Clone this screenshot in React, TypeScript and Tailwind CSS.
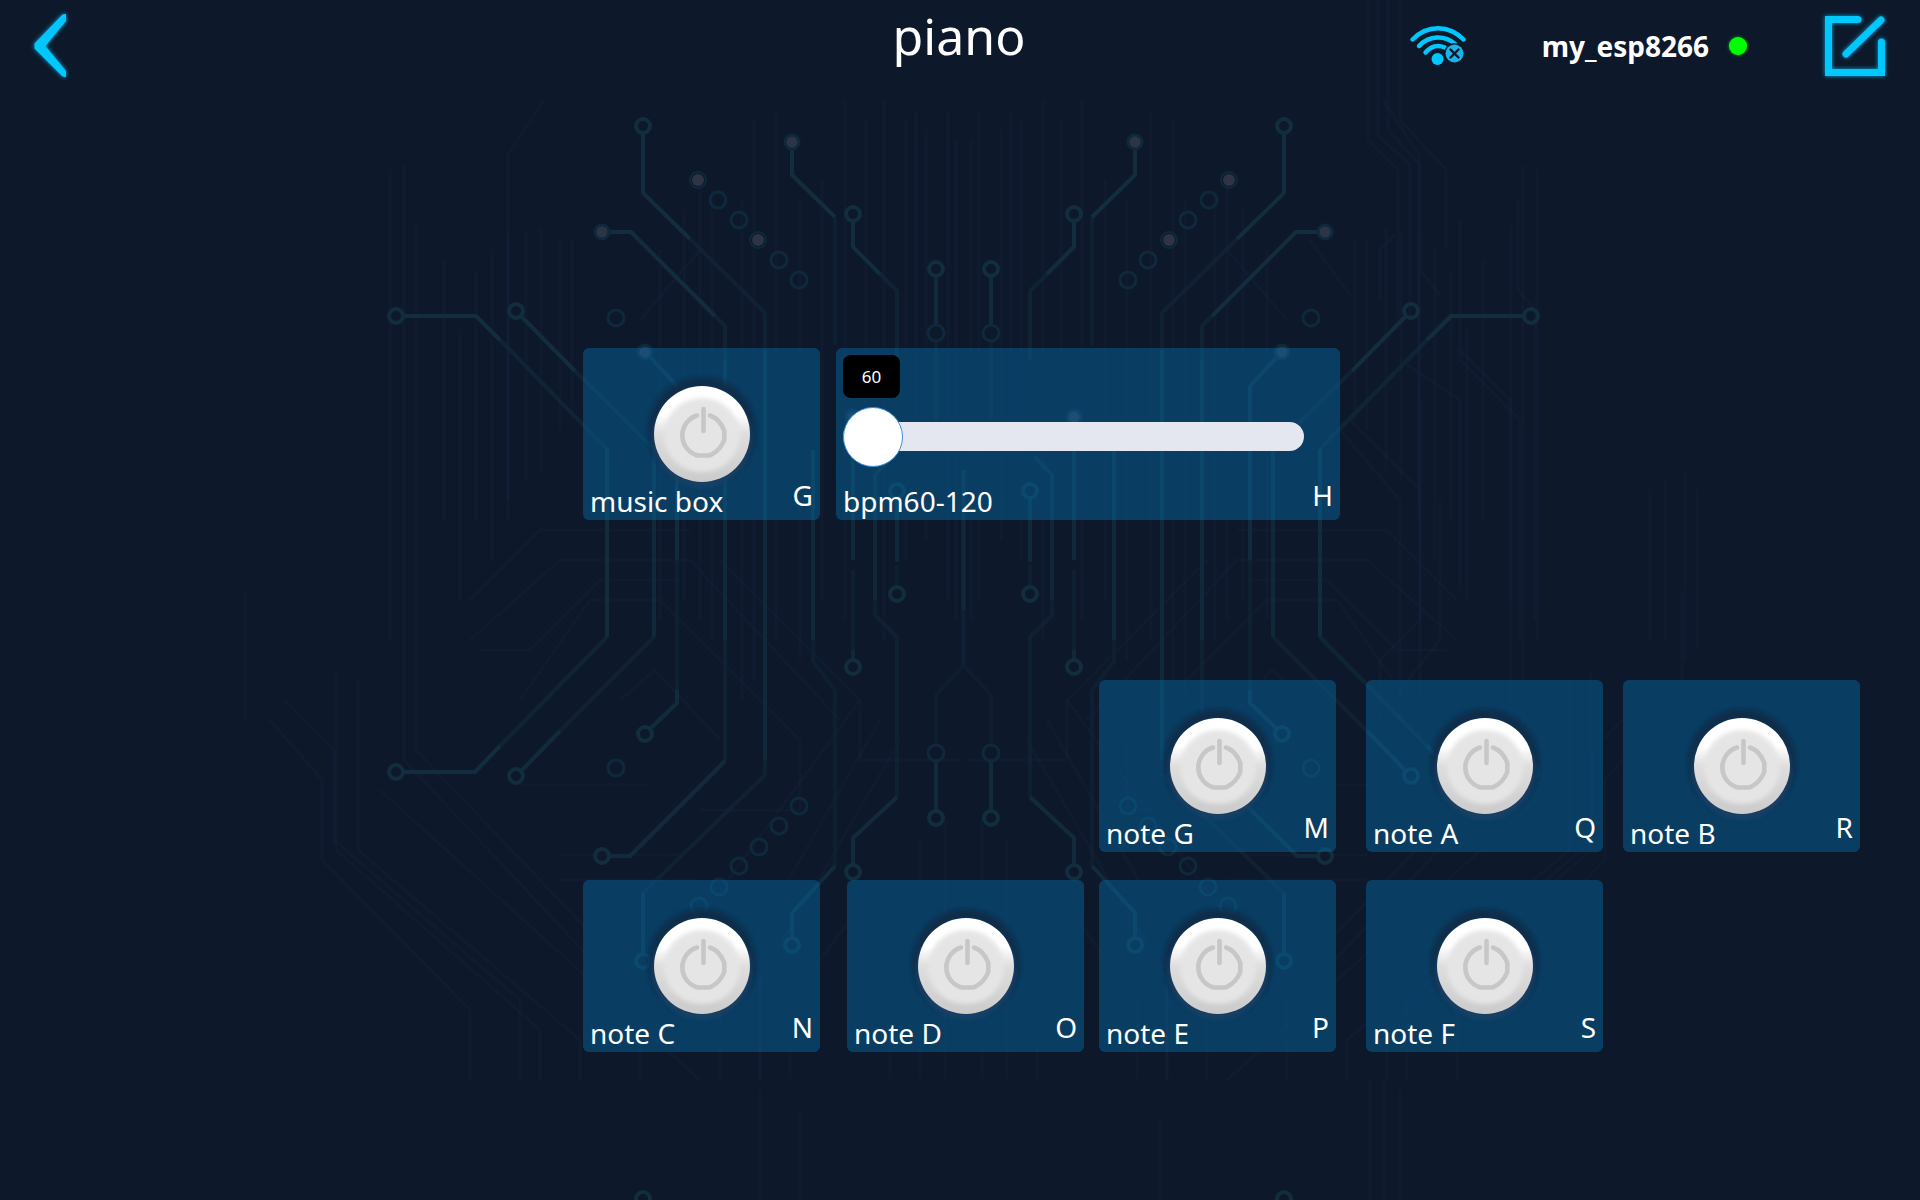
import { useState } from "react";

const FONT = "font-['Noto_Sans','Noto_Sans_CJK_SC',sans-serif]";

/* ---------- circuit board backdrop ---------- */

const TRACES: { d: string; o: number }[] = [
  { d: "M643 133V193L690 239", o: 1 },
  { d: "M690 239L765 313V350", o: 0.45 },
  { d: "M765 350V760", o: 0.8 },
  { d: "M765 760V775L643 893", o: 0.45 },
  { d: "M643 893V953", o: 0.9 },
  { d: "M792 150V175L835 217", o: 1 },
  { d: "M835 217V345", o: 0.4 },
  { d: "M853 222V247L880 274", o: 1 },
  { d: "M880 274L897 291V360", o: 0.5 },
  { d: "M936 277V325", o: 0.9 },
  { d: "M936 341V420", o: 0.4 },
  { d: "M610 232H631L715 316", o: 1 },
  { d: "M715 316L725 326V360", o: 0.5 },
  { d: "M725 360V640", o: 0.8 },
  { d: "M725 640V761", o: 0.45 },
  { d: "M725 761L630 856H610", o: 0.9 },
  { d: "M404 316H476L500 340", o: 1 },
  { d: "M500 340L607 449", o: 0.55 },
  { d: "M607 449V637", o: 0.95 },
  { d: "M607 637L500 746", o: 0.55 },
  { d: "M500 746L475 772H404", o: 1 },
  { d: "M522 317L575 371", o: 1 },
  { d: "M575 371L654 449", o: 0.5 },
  { d: "M654 449V637", o: 0.8 },
  { d: "M654 637L560 731", o: 0.45 },
  { d: "M560 731L522 770", o: 0.9 },
  { d: "M650 357L677 386V560", o: 0.9 },
  { d: "M677 560V690", o: 0.35 },
  { d: "M677 690V703L650 729", o: 0.9 },
  { d: "M813 450V640", o: 0.8 },
  { d: "M813 640V661L835 690V866", o: 0.3 },
  { d: "M835 866L792 913V937", o: 0.9 },
  { d: "M853 425V560", o: 0.8 },
  { d: "M853 570V650", o: 0.35 },
  { d: "M853 650V659", o: 0.8 },
  { d: "M897 499V562", o: 0.8 },
  { d: "M897 565V586", o: 0.3 },
  { d: "M892 457L875 475V600", o: 0.7 },
  { d: "M875 600V615L897 637V797", o: 0.35 },
  { d: "M897 797L853 838V864", o: 0.9 },
  { d: "M964 470V610", o: 0.5 },
  { d: "M964 610V665L936 695V745", o: 0.25 },
  { d: "M936 761V810", o: 0.9 },
];

const RINGS = [
  [643, 126], [853, 214], [936, 269], [396, 316], [516, 311], [897, 491],
  [396, 772], [516, 776], [645, 734], [602, 856], [643, 961], [792, 945],
  [853, 667], [897, 594], [853, 872], [936, 818], [643, 1199],
];

const DIM_RINGS = [
  [718, 200], [739, 220], [779, 260], [799, 280], [616, 318], [936, 333],
  [616, 768], [799, 806], [779, 826], [759, 847], [739, 866], [719, 887],
  [699, 906], [936, 753],
];

const PADS = [[792, 142], [602, 232], [645, 352], [853, 417]];
const SMALL_PADS = [[698, 180], [758, 240]];

const FAINT: string[] = [
  "M390 170V640", "M404 165V760L620 990", "M416 225V750L640 985", "M444 260V520", "M460 330V600",
  "M476 270V520", "M492 250V560", "M508 230V520", "M544 100L508 155V500", "M526 230V480", "M541 228V470",
  "M560 240V430", "M572 240V420", "M640 320L700 250", "M660 250V620", "M684 210V600", "M700 180V620",
  "M712 190V640", "M742 200V700", "M754 120V680", "M776 110V640", "M800 200V660", "M822 180V600",
  "M845 100V620", "M866 120V420", "M884 100V640", "M906 120V560", "M916 110V460", "M926 130V540",
  "M948 110V600", "M956 140V620", "M245 590V720", "M270 720L322 780V860L470 1010V1080",
  "M285 700L334 750V840L520 1000V1080", "M336 670V850L540 1030V1080", "M358 680V850L580 1040V1080",
  "M380 790L700 1080", "M470 600L540 530H690", "M480 650H530L600 580H680", "M520 700L590 600H660L800 740V810H700",
  "M470 640L560 560H690L840 720", "M520 785H650", "M560 855H680", "M560 880H700", "M860 700L640 1000V1080",
  "M880 720L720 1000V1080", "M900 740L760 980V1080", "M720 560L860 700V760H960", "M620 700L655 670L720 740",
  "M820 900L760 960V1078", "M850 920L790 1000V1078", "M890 900V1078", "M920 840V1078", "M945 820V1078",
];

const FAINT_RIGHT: string[] = [
  "M1368 0V140L1398 170V330", "M1378 0V135L1410 165V320", "M1388 0V130L1420 165V270L1440 295",
  "M1400 0V120L1446 170V250", "M1460 220V360L1520 420V640", "M1518 200V290L1535 310V620",
  "M1310 240L1350 295", "M1395 235L1380 250V300", "M1400 360L1460 400V590", "M1460 350L1510 400V600",
  "M1350 420L1420 490V700", "M1340 430L1400 500V720", "M1420 400V620L1380 660V720", "M1440 500V640L1400 690",
  "M1650 490V640", "M1665 480V640", "M1685 470V660", "M1697 490V650", "M1370 1080V1200", "M1384 1080V1200",
  "M1400 1090V1200", "M760 1090V1200", "M800 1110V1200", "M1160 1120V1200",
];

function CircuitHalf() {
  return (
    <g fill="none">
      <g stroke="#1a2440" strokeOpacity="0.250" strokeWidth="3">
        {FAINT.map((d) => (
          <path key={d} d={d} />
        ))}
      </g>
      <g stroke="#122d3e" strokeWidth="4" strokeLinejoin="round">
        {TRACES.map((t) => (
          <path key={t.d} d={t.d} strokeOpacity={t.o} />
        ))}
        {RINGS.map(([x, y]) => (
          <circle key={`${x}-${y}`} cx={x} cy={y} r="7" />
        ))}
      </g>
      <g stroke="#0f293c" strokeWidth="3">
        {DIM_RINGS.map(([x, y]) => (
          <circle key={`${x}-${y}`} cx={x} cy={y} r="8" />
        ))}
        {PADS.map(([x, y]) => (
          <circle key={`${x}-${y}`} cx={x} cy={y} r="7" fill="#2c3445" />
        ))}
        {SMALL_PADS.map(([x, y]) => (
          <g key={`${x}-${y}`}>
            <circle cx={x} cy={y} r="8" strokeWidth="2" />
            <circle cx={x} cy={y} r="6" fill="#2f3444" stroke="none" />
          </g>
        ))}
      </g>
    </g>
  );
}

function CircuitBackdrop() {
  return (
    <svg
      aria-hidden="true"
      viewBox="0 0 1920 1200"
      preserveAspectRatio="xMidYMid slice"
      className="pointer-events-none absolute inset-0 h-full w-full"
    >
      <g fill="none" stroke="#1a2440" strokeOpacity="0.250" strokeWidth="3">
        {FAINT_RIGHT.map((d) => (
          <path key={d} d={d} />
        ))}
      </g>
      <CircuitHalf />
      <g transform="translate(1927 0) scale(-1 1)">
        <CircuitHalf />
      </g>
    </svg>
  );
}

/* ---------- icons ---------- */

function BackIcon() {
  return (
    <svg width="40" height="72" viewBox="0 0 40 72" fill="none" className="drop-shadow-[0_0_2px_#00a8d8]">
      <path d="M31 5q2-1.500 4-1v7L14.500 36 35 61v6q-2 .5-4-1L3.500 38.500v-5z" fill="#00c8ff" />
    </svg>
  );
}

function WifiOffIcon() {
  return (
    <svg width="56" height="40" viewBox="0 0 56 40" fill="none">
      <g stroke="#00c8ff" strokeWidth="4.400" strokeLinecap="round">
        <path d="M2.500 13.500C17 -1.500 39 -1.500 53.500 13.500" />
        <path d="M9 20C19 9 35 9 45 18" />
        <path d="M15.500 26.500C21 20 28 18.500 35 21.500" />
      </g>
      <circle cx="27.500" cy="33" r="6" fill="#00c8ff" />
      <circle cx="44.500" cy="27.500" r="10.500" fill="#0d192b" />
      <circle cx="44.500" cy="27.500" r="9" fill="#19b4ea" />
      <path d="M40.500 23.500l8 8m0-8l-8 8" stroke="#0d192b" strokeWidth="2.400" strokeLinecap="round" />
    </svg>
  );
}

function EditIcon() {
  return (
    <svg width="64" height="64" viewBox="0 0 64 64" fill="none" className="drop-shadow-[0_0_2px_#00a8d8]">
      <path d="M34 5.500H5.500V58.500H58.500V29" stroke="#00c8ff" strokeWidth="7" />
      <path d="M34 5.500h1M58.500 29v-1" stroke="#00c8ff" strokeWidth="7" strokeLinecap="round" />
      <path d="M58 6L23 40" stroke="#00c8ff" strokeWidth="7" strokeLinecap="round" />
    </svg>
  );
}

function PowerKnob() {
  return (
    <svg width="96" height="96" viewBox="0 0 96 96" fill="none" className="overflow-visible">
      <defs>
        <linearGradient id="rim" x1="0" y1="0" x2="0" y2="1">
          <stop offset="0" stopColor="#ffffff" />
          <stop offset="0.300" stopColor="#ffffff" />
          <stop offset="0.500" stopColor="#dedede" />
          <stop offset="1" stopColor="#cbcbcb" />
        </linearGradient>
        <filter id="soft" x="-20%" y="-20%" width="140%" height="140%">
          <feGaussianBlur stdDeviation="2" />
        </filter>
      </defs>
      <circle cx="48" cy="45" r="54" fill="#0a2c47" fillOpacity="0.850" filter="url(#soft)" />
      <circle cx="48" cy="52" r="50" fill="#1b4a72" fillOpacity="0.600" filter="url(#soft)" />
      <circle cx="48" cy="48" r="48" fill="url(#rim)" />
      <ellipse cx="48" cy="49" rx="38" ry="37" fill="#e5e5e5" filter="url(#soft)" />
      <g stroke="#c8c6c7" strokeWidth="4.600" strokeLinecap="round">
        <path d="M43 29.500A20.800 20.800 0 0 0 41 68.500Q42.500 69.500 45 69.500H54Q56 69.500 57.500 68.500Q66 64.500 70.300 54V45Q66 33 56 29.500" />
        <path d="M49.500 23v22" />
      </g>
    </svg>
  );
}

/* ---------- widgets ---------- */

function Caption({ name, pin }: { name: string; pin: string }) {
  return (
    <div className="flex w-full items-start justify-between px-[7px] text-[28px] leading-[26px] text-white">
      <span className="pt-1.5">{name}</span>
      <span>{pin}</span>
    </div>
  );
}

const CARD = "flex h-[172px] flex-col rounded-md bg-[#0573b6]/40";

function PowerCard({ name, pin, className }: { name: string; pin: string; className: string }) {
  const [on, setOn] = useState(false);
  return (
    <section className={`${CARD} w-[237px] items-center pt-[38px] ${className}`}>
      <button
        type="button"
        aria-label={name}
        aria-pressed={on}
        onClick={() => setOn(!on)}
        className="rounded-full"
      >
        <PowerKnob />
      </button>
      <Caption name={name} pin={pin} />
    </section>
  );
}

function SliderCard({ className }: { className: string }) {
  const [bpm, setBpm] = useState(60);
  return (
    <section className={`${CARD} w-[504px] pt-[7px] ${className}`}>
      <output
        htmlFor="bpm"
        className="ml-[7px] flex h-[43px] w-[57px] items-center justify-center rounded-lg bg-black text-[17px] text-white"
      >
        {bpm}
      </output>
      <input
        id="bpm"
        type="range"
        min={60}
        max={120}
        value={bpm}
        aria-label="bpm60-120"
        onChange={(e) => setBpm(Number(e.target.value))}
        className="mt-2 mr-9 ml-[7px] h-[60px] appearance-none bg-transparent [&::-webkit-slider-runnable-track]:h-[29px] [&::-webkit-slider-runnable-track]:rounded-full [&::-webkit-slider-runnable-track]:bg-[#e4e7ef] [&::-webkit-slider-thumb]:-mt-[15px] [&::-webkit-slider-thumb]:size-[60px] [&::-webkit-slider-thumb]:appearance-none [&::-webkit-slider-thumb]:rounded-full [&::-webkit-slider-thumb]:border [&::-webkit-slider-thumb]:border-solid [&::-webkit-slider-thumb]:border-[#3b8fe0] [&::-webkit-slider-thumb]:bg-white"
      />
      <div className="mt-4">
        <Caption name="bpm60-120" pin="H" />
      </div>
    </section>
  );
}

export default function App() {
  return (
    <div className={`relative min-h-screen overflow-hidden bg-[#0d192b] ${FONT}`}>
      <CircuitBackdrop />
      <div className="relative">
        <header className="grid h-[92px] grid-cols-[1fr_auto_1fr] items-center pr-[33px] pl-[31px]">
          <button type="button" aria-label="Back" className="justify-self-start">
            <BackIcon />
          </button>
          <h1 className="pb-5 text-[50px] leading-[60px] text-white">piano</h1>
          <div className="flex items-center justify-end">
            <WifiOffIcon />
            <span className="ml-[76px] text-[28px] leading-10 font-bold text-white">my_esp8266</span>
            <span className="ml-5 size-[18px] rounded-full bg-[#00ff00] shadow-[0_0_3px_#00c000]" />
            <button type="button" aria-label="Edit" className="ml-[76px]">
              <EditIcon />
            </button>
          </div>
        </header>
        <main className="mt-64 grid grid-cols-[minmax(0,583fr)_minmax(0,253fr)_minmax(0,11fr)_minmax(0,252fr)_minmax(0,267fr)_minmax(0,257fr)_minmax(0,297fr)] grid-rows-[172px_104px_172px_172px] gap-y-7">
          <PowerCard name="music box" pin="G" className="col-start-2 row-start-1" />
          <SliderCard className="col-start-3 row-start-1" />
          <PowerCard name="note G" pin="M" className="col-start-5 row-start-3" />
          <PowerCard name="note A" pin="Q" className="col-start-6 row-start-3" />
          <PowerCard name="note B" pin="R" className="col-start-7 row-start-3" />
          <PowerCard name="note C" pin="N" className="col-start-2 row-start-4" />
          <PowerCard name="note D" pin="O" className="col-start-4 row-start-4" />
          <PowerCard name="note E" pin="P" className="col-start-5 row-start-4" />
          <PowerCard name="note F" pin="S" className="col-start-6 row-start-4" />
        </main>
      </div>
    </div>
  );
}
